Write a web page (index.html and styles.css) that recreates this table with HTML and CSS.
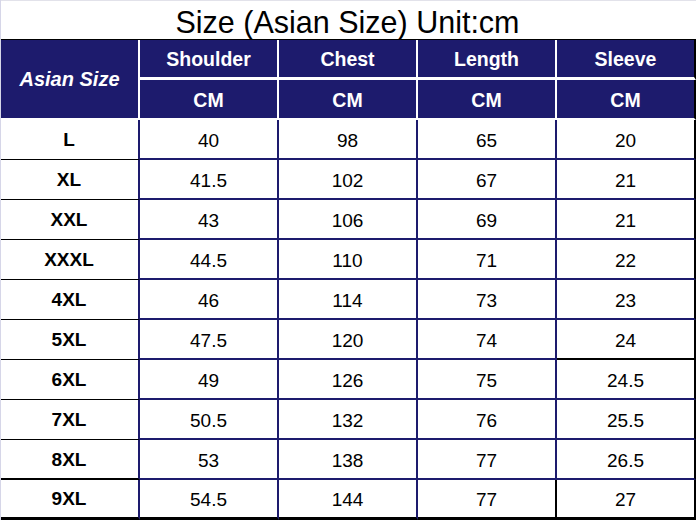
FILE: index.html
```html
<!DOCTYPE html>
<html>
<head>
<meta charset="utf-8">
<link rel="stylesheet" href="styles.css">
</head>
<body>
<div class="chart">
  <div class="title">Size (Asian Size) Unit:cm</div>
  <div class="grid">
    <div class="hd hd-size">Asian Size</div>
    <div class="hd hd-top">Shoulder</div>
    <div class="hd hd-top">Chest</div>
    <div class="hd hd-top">Length</div>
    <div class="hd hd-top hd-last">Sleeve</div>
    <div class="hd hd-unit">CM</div>
    <div class="hd hd-unit">CM</div>
    <div class="hd hd-unit">CM</div>
    <div class="hd hd-unit hd-last">CM</div>

    <div class="c sz">L</div><div class="c">40</div><div class="c">98</div><div class="c">65</div><div class="c last">20</div>
    <div class="c sz">XL</div><div class="c">41.5</div><div class="c">102</div><div class="c">67</div><div class="c last">21</div>
    <div class="c sz">XXL</div><div class="c">43</div><div class="c">106</div><div class="c">69</div><div class="c last">21</div>
    <div class="c sz">XXXL</div><div class="c">44.5</div><div class="c">110</div><div class="c">71</div><div class="c last">22</div>
    <div class="c sz">4XL</div><div class="c">46</div><div class="c">114</div><div class="c">73</div><div class="c last">23</div>
    <div class="c sz">5XL</div><div class="c">47.5</div><div class="c">120</div><div class="c">74</div><div class="c last blk-b">24</div>
    <div class="c sz">6XL</div><div class="c">49</div><div class="c">126</div><div class="c">75</div><div class="c last">24.5</div>
    <div class="c sz">7XL</div><div class="c">50.5</div><div class="c">132</div><div class="c">76</div><div class="c last">25.5</div>
    <div class="c sz sz-thick">8XL</div><div class="c">53</div><div class="c">138</div><div class="c">77</div><div class="c last">26.5</div>
    <div class="c sz end">9XL</div><div class="c end">54.5</div><div class="c end">144</div><div class="c end blk-r">77</div><div class="c last end">27</div>
  </div>
</div>
</body>
</html>
```

FILE: styles.css
```css
* {
  box-sizing: border-box;
}

html, body {
  margin: 0;
  padding: 0;
  background: #ffffff;
}

body {
  font-family: "Liberation Sans", Arial, sans-serif;
  color: #000;
}

.chart {
  width: 696px;
  height: 520px;
  border-left: 1px solid #d6d6e8;
  overflow: hidden;
}

.title {
  height: 40px;
  border-top: 1px solid #e2e2ea;
  border-bottom: 1px solid #000;
  padding-top: 4px;
  font-size: 30.5px;
  line-height: 34px;
  text-align: center;
  padding-right: 2px;
}

.grid {
  display: grid;
  grid-template-columns: repeat(5, 139px);
  grid-template-rows: 40px 40px repeat(10, 40px);
}

.hd {
  background: #1d1b6d;
  color: #fff;
  font-weight: bold;
  font-size: 19.5px;
  display: flex;
  align-items: center;
  justify-content: center;
  border-right: 2px solid #fff;
  border-bottom: 2px solid #fff;
  padding-top: 2px;
}

.hd-size {
  grid-row: span 2;
  font-style: italic;
  font-size: 20px;
  padding-top: 1px;
}

.hd-top {
  border-bottom-width: 3px;
}

.hd-last {
  border-right: 2px solid #000;
}

.c {
  display: flex;
  align-items: center;
  justify-content: center;
  font-size: 19px;
  padding-top: 3px;
  border-right: 2px solid #1d1b6d;
  border-bottom: 2px solid #1d1b6d;
}

.sz {
  font-weight: bold;
  border-bottom: 1px solid #000;
  padding-top: 1px;
  padding-right: 1px;
}

.sz-thick {
  border-bottom-width: 2px;
}

.last {
  border-right: 2px solid #000;
}

.blk-b {
  border-bottom-color: #000;
}

.blk-r {
  border-right-color: #000;
}

.end {
  border-bottom: 3px solid #000;
}
```
